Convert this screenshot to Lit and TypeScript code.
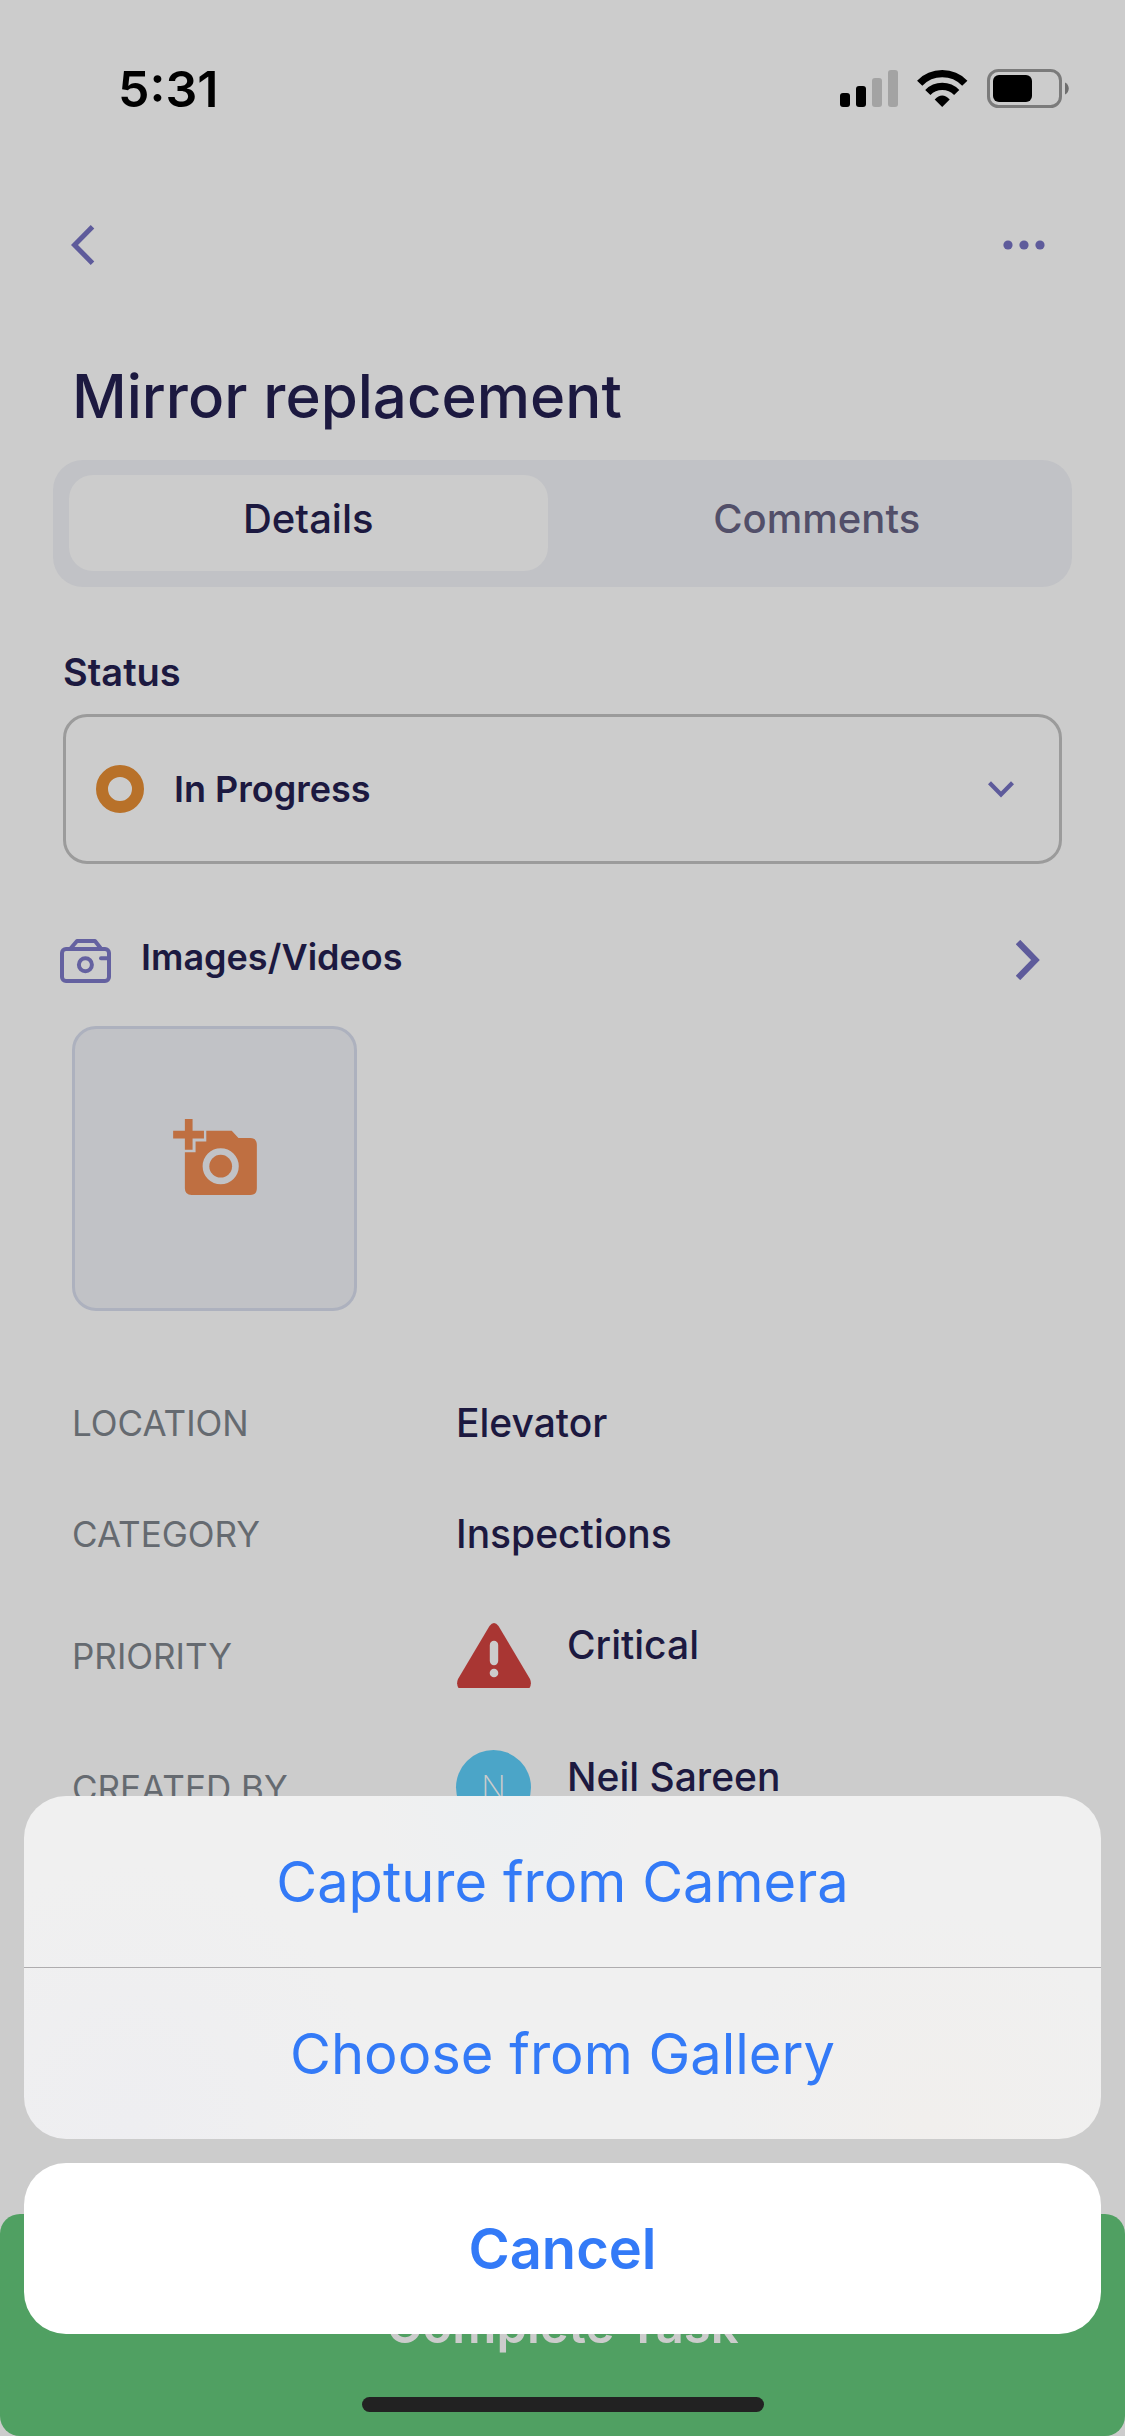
import { LitElement, html, css, svg, nothing } from "lit";
import { customElement, state } from "lit/decorators.js";

const signalIcon = svg`<svg class="signal" viewBox="0 0 58 37" width="58" height="37" aria-hidden="true">
  <rect x="0" y="23" width="10" height="14" rx="3" fill="#000"/>
  <rect x="16" y="16" width="10" height="21" rx="3" fill="#000"/>
  <rect x="32" y="8" width="10" height="29" rx="3" fill="#a3a3a3"/>
  <rect x="48" y="0" width="10" height="37" rx="3" fill="#a3a3a3"/>
</svg>`;

const wifiIcon = svg`<svg viewBox="0 0 51 37" width="51" height="37" aria-hidden="true">
  <path d="M2.7 13.2A31.4 31.4 0 0 1 47.8 13.2" fill="none" stroke="#000" stroke-width="7.3"/>
  <path d="M10.8 22.5A20.3 20.3 0 0 1 39.7 22.5" fill="none" stroke="#000" stroke-width="7.3"/>
  <path d="M17.7 29.5Q25.2 21.5 32.7 29.5L25.2 37Z" fill="#000"/>
</svg>`;

const batteryIcon = svg`<svg viewBox="0 0 82 39" width="82" height="39" aria-hidden="true">
  <rect x="1.5" y="1.5" width="72" height="36" rx="10" fill="none" stroke="#7b7b7b" stroke-width="3"/>
  <rect x="6" y="6" width="39" height="27" rx="6" fill="#000"/>
  <path d="M78 13.5C83 15.5 83 23.500 78 25.500Z" fill="#6e6e6e"/>
</svg>`;

const backIcon = svg`<svg viewBox="0 0 24 40" width="24" height="40" aria-hidden="true">
  <path d="M21.500 1.800L3.500 20L21.500 38.200" fill="none" stroke="#5e5b9b" stroke-width="5"/>
</svg>`;

const moreIcon = svg`<svg viewBox="0 0 42 10" width="42" height="10" aria-hidden="true" fill="#5e5b9b">
  <circle cx="5" cy="5" r="4.600"/><circle cx="21" cy="5" r="4.600"/><circle cx="37" cy="5" r="4.600"/>
</svg>`;

const ringIcon = svg`<svg viewBox="0 0 48 48" width="48" height="48" aria-hidden="true">
  <circle cx="24" cy="24" r="18" fill="none" stroke="#b87129" stroke-width="12"/>
</svg>`;

const caretIcon = svg`<svg class="caret" viewBox="0 0 26 17" width="26" height="17" aria-hidden="true">
  <path d="M1.500 1.800L13 13.500L24.500 1.800" fill="none" stroke="#5e5b9b" stroke-width="4.200"/>
</svg>`;

const cameraIcon = svg`<svg viewBox="0 0 51 44" width="51" height="44" aria-hidden="true" fill="none" stroke="#6461a0" stroke-width="4" stroke-linecap="round" stroke-linejoin="round">
  <rect x="2" y="10" width="47" height="32" rx="4"/>
  <path d="M11 9L17 2H35L40.500 9"/>
  <circle cx="25.400" cy="25.700" r="6.500"/>
  <path d="M41 19.300H48"/>
</svg>`;

const forwardIcon = svg`<svg class="forward" viewBox="0 0 24 40" width="24" height="40" aria-hidden="true">
  <path d="M2 2L19.500 20L2 38" fill="none" stroke="#5e5b9b" stroke-width="6.200"/>
</svg>`;

const addPhotoIcon = svg`<svg viewBox="0 0 250 227" width="84" height="76" aria-hidden="true" fill="#bf6f41">
  <path d="M35 0H58V35H92V58H58V92H35V58H0V35H35Z"/>
  <path fill-rule="evenodd" d="M35 99H67V67H99V35H175L195 57H230Q250 57 250 77V207Q250 227 230 227H55Q35 227 35 207ZM142 87A54 54 0 1 0 142 195A54 54 0 1 0 142 87Z"/>
  <circle cx="142" cy="141" r="34"/>
</svg>`;

const criticalIcon = svg`<svg viewBox="0 0 75 65" width="75" height="65" aria-hidden="true">
  <path d="M33.500 3Q38 -3 42.500 3L74 56Q76 61 73.500 65H2.500Q0 61 2 56Z" fill="#a93633"/>
  <path d="M38 22V38" stroke="#cccccc" stroke-width="8.400" stroke-linecap="round"/>
  <circle cx="38" cy="50" r="4.300" fill="#cccccc"/>
</svg>`;

interface DetailRow {
  label: string;
  value: string;
  icon?: "critical" | "avatar";
}

const ROWS: DetailRow[] = [
  { label: "LOCATION", value: "Elevator" },
  { label: "CATEGORY", value: "Inspections" },
  { label: "PRIORITY", value: "Critical", icon: "critical" },
  { label: "CREATED BY", value: "Neil Sareen", icon: "avatar" },
];

@customElement("app-root")
export class AppRoot extends LitElement {
  @state() private tab = "Details";

  static styles = css`
    :host {
      display: block;
      font-family: Inter, "Liberation Sans", sans-serif;
      color: #1c1940;
    }
    * {
      box-sizing: border-box;
    }
    button,
    select {
      font: inherit;
      color: inherit;
      background: none;
      border: 0;
      margin: 0;
      padding: 0;
      cursor: pointer;
    }
    svg {
      display: block;
      flex: none;
    }
    .screen {
      position: relative;
      display: flex;
      flex-direction: column;
      min-height: 100vh;
      background: #cccccc;
    }
    .status-bar {
      display: flex;
      justify-content: space-between;
      align-items: center;
      height: 132px;
      padding: 45px 56px 0 118px;
      color: #000;
    }
    .time {
      font-size: 50px;
      line-height: 60px;
      font-weight: 600;
    }
    .indicators {
      display: flex;
      align-items: center;
      gap: 19px;
    }
    .nav {
      display: flex;
      justify-content: space-between;
      margin-top: 68px;
      padding: 0 56px 0 48px;
    }
    .nav-button {
      display: grid;
      place-items: center;
      width: 70px;
      height: 90px;
    }
    .nav-button.more {
      width: 90px;
    }
    .title {
      margin: 70px 72px 28px;
      font-size: 60px;
      line-height: 72px;
      font-weight: 500;
    }
    .tabs {
      display: grid;
      grid-template-columns: 1fr 1fr;
      gap: 30px;
      height: 127px;
      margin: 0 53px;
      padding: 15px 16px 16px;
      border-radius: 30px;
      background: #c1c2c6;
    }
    .tab {
      padding-bottom: 10px;
      border-radius: 24px;
      font-size: 40px;
      font-weight: 500;
      color: #524f69;
    }
    .tab.active {
      background: #cccccc;
      color: #1c1940;
    }
    .field {
      display: flex;
      flex-direction: column;
      gap: 18px;
      margin: 61px 63px 0;
      font-size: 36px;
      line-height: 48px;
      font-weight: 600;
    }
    .field-label {
      font-size: 38px;
    }
    .select-box {
      display: flex;
      align-items: center;
      gap: 30px;
      height: 150px;
      padding: 0 45px 0 30px;
      border: 3px solid #9b9b9b;
      border-radius: 24px;
    }
    .select {
      flex: 1;
      min-width: 0;
      height: 100%;
      appearance: none;
      outline: none;
    }
    .media-link {
      display: flex;
      align-items: center;
      justify-content: space-between;
      height: 48px;
      margin: 69px 85px 0 60px;
      color: inherit;
      text-decoration: none;
      font-size: 36px;
      font-weight: 600;
    }
    .media-name {
      display: flex;
      align-items: center;
      gap: 30px;
    }
    .media-name svg {
      margin-top: 8px;
    }
    .forward {
      margin-top: 6px;
    }
    .add-photo {
      display: grid;
      place-items: center;
      width: 285px;
      height: 285px;
      margin: 45px 72px 0;
      padding-bottom: 23px;
      border: 3px solid #adb1be;
      border-radius: 24px;
      background: #c1c2c6;
    }
    .details {
      display: flex;
      flex-direction: column;
      gap: 57px;
      margin: 85px 72px 0;
      line-height: 54px;
    }
    .row {
      display: grid;
      grid-template-columns: 384px 1fr;
      align-items: center;
    }
    .label {
      font-size: 35px;
      color: #656a70;
    }
    .value {
      display: flex;
      gap: 36px;
      margin: 0;
      font-size: 39px;
      font-weight: 500;
    }
    .mark {
      display: grid;
      place-items: center;
      width: 75px;
      height: 75px;
    }
    .avatar {
      border-radius: 50%;
      background: #4ba5c8;
      color: #cccccc;
      font-size: 32px;
      font-weight: 200;
    }
    .complete {
      height: 222px;
      margin-top: auto;
      border-radius: 20px;
      background: #50a062;
      color: #cccccc;
      font-size: 49px;
      font-weight: 600;
    }
    .sheet {
      position: fixed;
      left: 24px;
      right: 24px;
      bottom: 102px;
      display: flex;
      flex-direction: column;
      gap: 24px;
      color: #337af7;
      font-size: 56px;
    }
    .group {
      display: flex;
      flex-direction: column;
      overflow: hidden;
      border-radius: 42px;
      background:
        radial-gradient(circle at 45% 0, #edf0f2, transparent 20%),
        radial-gradient(circle at 10% 95%, #eeeef1, transparent 25%),
        radial-gradient(circle at 84% 95%, #f1efed, transparent 22%),
        #f0f0f0;
    }
    .action {
      height: 171px;
    }
    .action + .action {
      height: 172px;
      border-top: 1px solid #aeacae;
    }
    .cancel {
      height: 171px;
      border-radius: 42px;
      background: #fff;
      font-weight: 600;
    }
    .home {
      position: fixed;
      left: 50%;
      bottom: 24px;
      width: 402px;
      height: 15px;
      margin-left: -201px;
      border-radius: 8px;
      background: #222222;
    }
  `;

  private renderTab(name: string) {
    const active = this.tab === name;
    return html`<button
      class="tab ${active ? "active" : ""}"
      role="tab"
      aria-selected=${active}
      @click=${() => (this.tab = name)}
    >${name}</button>`;
  }

  private renderRow(row: DetailRow) {
    const mark =
      row.icon === "critical"
        ? html`<span class="mark">${criticalIcon}</span>`
        : row.icon === "avatar"
          ? html`<span class="mark avatar">N</span>`
          : nothing;
    return html`<div class="row">
      <dt class="label">${row.label}</dt>
      <dd class="value">${mark}<span>${row.value}</span></dd>
    </div>`;
  }

  render() {
    return html`
      <main class="screen">
        <div class="status-bar">
          <span class="time">5:31</span>
          <div class="indicators">${signalIcon}${wifiIcon}${batteryIcon}</div>
        </div>
        <nav class="nav">
          <button class="nav-button" aria-label="Back">${backIcon}</button>
          <button class="nav-button more" aria-label="More options">${moreIcon}</button>
        </nav>
        <h1 class="title">Mirror replacement</h1>
        <div class="tabs" role="tablist">
          ${this.renderTab("Details")}${this.renderTab("Comments")}
        </div>
        <div class="field">
          <label class="field-label" for="status">Status</label>
          <div class="select-box">
            ${ringIcon}
            <select id="status" class="select">
              <option>In Progress</option>
            </select>
            ${caretIcon}
          </div>
        </div>
        <a class="media-link" href="#media">
          <span class="media-name">${cameraIcon}<span>Images/Videos</span></span>
          ${forwardIcon}
        </a>
        <button class="add-photo" aria-label="Add photo">${addPhotoIcon}</button>
        <dl class="details">${ROWS.map((row) => this.renderRow(row))}</dl>
        <button class="complete">Complete Task</button>
      </main>
      <div class="sheet" role="dialog" aria-label="Add media">
        <div class="group">
          <button class="action">Capture from Camera</button>
          <button class="action">Choose from Gallery</button>
        </div>
        <button class="cancel">Cancel</button>
      </div>
      <div class="home"></div>
    `;
  }
}
